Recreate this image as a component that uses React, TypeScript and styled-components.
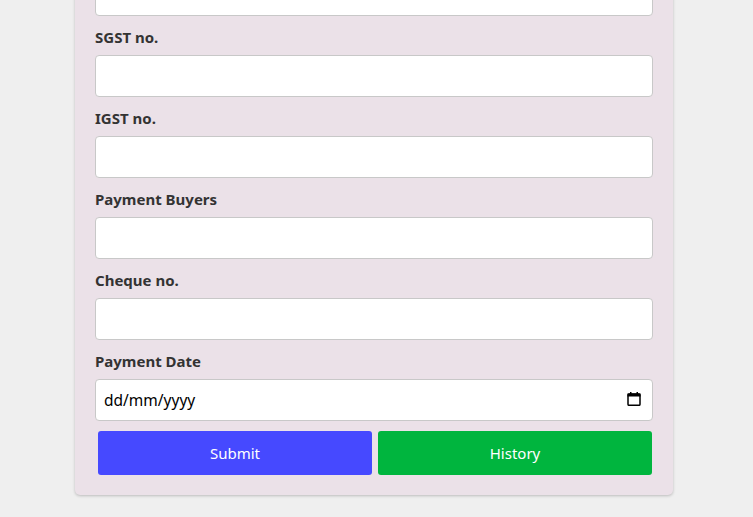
import React, { useState } from "react";
import styled, { createGlobalStyle } from "styled-components";

const GlobalStyle = createGlobalStyle`
  html, body {
    margin: 0;
    padding: 0;
    background: #efefef;
    font-family: "Noto Sans", "Open Sans", sans-serif;
    overflow: hidden;
  }
  * {
    box-sizing: border-box;
  }
`;

const Page = styled.div`
  display: flex;
  justify-content: center;
  padding: 0 5px 22px 0;
`;

const Card = styled.form`
  width: 598px;
  margin-top: -46px;
  padding: 20px;
  background: #ebe1e8;
  border-radius: 5px;
  box-shadow: 0 1px 3px rgba(0, 0, 0, 0.22);
  display: flex;
  flex-direction: column;
`;

const Field = styled.div`
  display: flex;
  flex-direction: column;
  margin-bottom: 10px;
`;

const Label = styled.label`
  font-size: 15px;
  line-height: 22px;
  font-weight: 700;
  color: #333;
  margin-bottom: 7px;
`;

const InputWrap = styled.div`
  position: relative;
`;

const Input = styled.input`
  display: block;
  height: 42px;
  width: 100%;
  padding: 0 8px;
  border: 1px solid #c8c8c8;
  border-radius: 4px;
  background: #fff;
  font-family: inherit;
  font-size: 15.5px;
  color: #000;
  outline: none;

  &::placeholder {
    color: #000;
    opacity: 1;
  }
`;

const CalendarIcon = styled.svg`
  position: absolute;
  right: 12px;
  top: 13px;
  width: 14px;
  height: 14px;
  pointer-events: none;
`;

const ButtonRow = styled.div`
  display: flex;
  gap: 6px;
  padding: 0 1px 0 3px;
`;

const Button = styled.button<{ $tone: "blue" | "green" }>`
  flex: 1;
  height: 44px;
  border: none;
  border-radius: 3px;
  background: ${({ $tone }) => ($tone === "blue" ? "#4649ff" : "#00b53e")};
  color: #fff;
  font-family: inherit;
  font-size: 15px;
  cursor: pointer;
`;

const fields = [
  { name: "cgst", label: "", date: false },
  { name: "sgst", label: "SGST no.", date: false },
  { name: "igst", label: "IGST no.", date: false },
  { name: "buyers", label: "Payment Buyers", date: false },
  { name: "cheque", label: "Cheque no.", date: false },
  { name: "date", label: "Payment Date", date: true },
];

const Calendar = () => (
  <CalendarIcon viewBox="0 0 14 14">
    <rect x="3" y="0" width="1.5" height="2" fill="#000" />
    <rect x="9.5" y="0" width="1.5" height="2" fill="#000" />
    <rect x="0.5" y="1.5" width="13" height="3" fill="#000" />
    <rect
      x="1"
      y="2"
      width="12"
      height="11.3"
      rx="1"
      fill="none"
      stroke="#000"
      strokeWidth="1.5"
    />
  </CalendarIcon>
);

const App = () => {
  const [form, setForm] = useState<Record<string, string>>({});
  const handleChange = (e: React.ChangeEvent<HTMLInputElement>) => {
    setForm({ ...form, [e.target.name]: e.target.value });
  };

  return (
    <>
      <GlobalStyle />
      <Page>
        <Card onSubmit={e => e.preventDefault()}>
          {fields.map(f => (
            <Field key={f.name}>
              {f.label && <Label htmlFor={f.name}>{f.label}</Label>}
              <InputWrap>
                <Input
                  id={f.name}
                  name={f.name}
                  type="text"
                  placeholder={f.date ? "dd/mm/yyyy" : ""}
                  value={form[f.name] || ""}
                  onChange={handleChange}
                />
                {f.date && <Calendar />}
              </InputWrap>
            </Field>
          ))}
          <ButtonRow>
            <Button type="submit" $tone="blue">
              Submit
            </Button>
            <Button type="button" $tone="green">
              History
            </Button>
          </ButtonRow>
        </Card>
      </Page>
    </>
  );
};

export default App;
